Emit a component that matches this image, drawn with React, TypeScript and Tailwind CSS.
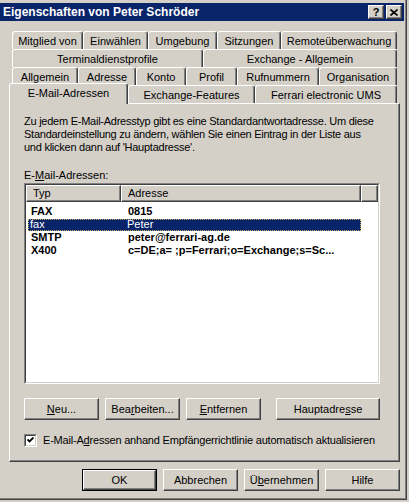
import React from 'react'

const raised =
  'bg-[#d4d0c8] border border-t-white border-l-white border-r-[#404040] border-b-[#404040] shadow-[inset_-1px_-1px_0_#808080]'

const rows = [
  [
    { label: 'Mitglied von', w: 'w-[71px]' },
    { label: 'Einwählen', w: 'w-[65px]' },
    { label: 'Umgebung', w: 'w-[69px]' },
    { label: 'Sitzungen', w: 'w-[64px]' },
    { label: 'Remoteüberwachung', w: 'w-[116px]' },
  ],
  [
    { label: 'Terminaldienstprofile', w: 'w-[191px]' },
    { label: 'Exchange - Allgemein', w: 'w-[194px]' },
  ],
  [
    { label: 'Allgemein', w: 'w-[66px]' },
    { label: 'Adresse', w: 'w-[58px]' },
    { label: 'Konto', w: 'w-[50px]' },
    { label: 'Profil', w: 'w-[51px]' },
    { label: 'Rufnummern', w: 'w-[82px]' },
    { label: 'Organisation', w: 'w-[78px]' },
  ],
]

const entries = [
  { typ: 'FAX', addr: '0815' },
  { typ: 'fax', addr: 'Peter', selected: true },
  { typ: 'SMTP', addr: 'peter@ferrari-ag.de' },
  { typ: 'X400', addr: 'c=DE;a= ;p=Ferrari;o=Exchange;s=Sc...' },
]

function Tab({ label, w }: { label: string; w: string }) {
  return (
    <div
      className={`${w} h-[18px] flex items-center justify-center pt-px rounded-t-[3px] bg-[#d4d0c8] border-l border-t border-r border-l-white border-t-white border-r-[#404040] shadow-[inset_-1px_0_0_#808080] whitespace-nowrap`}
    >
      {label}
    </div>
  )
}

function Button({ children, w = 'w-[75px]', def = false }: { children: React.ReactNode; w?: string; def?: boolean }) {
  if (def) {
    return (
      <div className={`${w} h-[22px] border border-black`}>
        <div className={`${raised} h-full flex items-center justify-center`}>{children}</div>
      </div>
    )
  }
  return <div className={`${w} h-[22px] ${raised} flex items-center justify-center`}>{children}</div>
}

export default function App() {
  return (
    <div className="w-[409px] h-[502px] bg-[#d4d0c8] text-black text-[11px] leading-[13px] font-['Liberation_Sans',Arial,sans-serif] select-none">
      <div className="w-[407px] h-[500px] border-r border-b border-[#404040]">
        <div className="h-full border-r border-b border-[#808080] pt-[3px]">
          {/* title bar */}
          <div className="h-[18px] mr-px bg-[#0a246a] flex items-center pl-[3px] pr-[2px]">
            <span className="text-white font-bold text-[12px] flex-1">Eigenschaften von Peter Schröder</span>
            <div className="flex gap-[2px]">
              <div className={`w-[16px] h-[14px] ${raised} flex items-center justify-center font-bold text-[11px] leading-none`}>?</div>
              <div className={`w-[16px] h-[14px] ${raised} flex items-center justify-center`}>
                <svg width="8" height="7" viewBox="0 0 8 7">
                  <path d="M0.5 0.5 L7.5 6.5 M7.5 0.5 L0.5 6.5" stroke="black" strokeWidth="1.6" />
                </svg>
              </div>
            </div>
          </div>

          <div className="pl-[9px] mt-[10px]">
            {/* tab rows */}
            {rows.map((row, i) => (
              <div key={i} className="flex ml-[3px]">
                {row.map((t) => (
                  <Tab key={t.label} label={t.label} w={t.w} />
                ))}
              </div>
            ))}
            <div className="flex h-[18px] items-end relative z-10">
              <div className="w-[119px] h-[21px] -mb-px rounded-t-[3px] bg-[#d4d0c8] border-l border-t border-r border-l-white border-t-white border-r-[#404040] shadow-[inset_-1px_0_0_#808080] flex items-center justify-center pb-[2px]">
                E-Mail-Adressen
              </div>
              <Tab label="Exchange-Features" w="w-[127px]" />
              <Tab label="Ferrari electronic UMS" w="w-[142px]" />
            </div>

            {/* panel */}
            <div className="w-[391px] h-[359px] border border-t-white border-l-white border-r-[#404040] border-b-[#404040] shadow-[inset_-1px_-1px_0_#808080] pl-[14px] pt-[11px]">
              <p className="whitespace-nowrap tracking-[-0.25px]">
                Zu jedem E-Mail-Adresstyp gibt es eine Standardantwortadresse. Um diese
                <br />
                Standardeinstellung zu ändern, wählen Sie einen Eintrag in der Liste aus
                <br />
                und klicken dann auf 'Hauptadresse'.
              </p>
              <div className="mt-[15px]">
                E-<u>M</u>ail-Adressen:
              </div>

              {/* list view */}
              <div className="mt-px w-[356px] h-[201px] border border-t-[#808080] border-l-[#808080] border-r-white border-b-white">
                <div className="h-full border border-t-[#404040] border-l-[#404040] border-r-[#d4d0c8] border-b-[#d4d0c8] bg-white">
                  <div className="flex h-[17px]">
                    <div className={`w-[95px] ${raised} pl-[6px] flex items-center`}>Typ</div>
                    <div className={`w-[240px] ${raised} pl-[6px] flex items-center`}>Adresse</div>
                    <div className={`flex-1 ${raised}`} />
                  </div>
                  <div className="pt-[3px]">
                    {entries.map((e) =>
                      e.selected ? (
                        <div key={e.typ} className="flex h-[13px] items-center">
                          <div className="ml-[2px] w-[333px] h-[12px] flex items-center bg-[#0a246a] text-white outline-1 outline-dotted outline-[#c8b060] -outline-offset-1">
                            <span className="w-[93px] pl-[2px]">{e.typ}</span>
                            <span className="pl-[6px]">{e.addr}</span>
                          </div>
                        </div>
                      ) : (
                        <div key={e.typ} className="flex h-[13px] items-center font-bold whitespace-nowrap">
                          <span className="w-[95px] pl-[5px]">{e.typ}</span>
                          <span className="pl-[7px]">{e.addr}</span>
                        </div>
                      ),
                    )}
                  </div>
                </div>
              </div>

              {/* buttons */}
              <div className="flex mt-[14px] gap-[6px]">
                <Button>
                  <span>
                    <u>N</u>eu...
                  </span>
                </Button>
                <Button>
                  <span>
                    Bea<u>r</u>beiten...
                  </span>
                </Button>
                <Button>
                  <span>
                    <u>E</u>ntfernen
                  </span>
                </Button>
                <div className="ml-[9px]">
                  <Button w="w-[104px]">
                    <span>
                      Hauptadre<u>s</u>se
                    </span>
                  </Button>
                </div>
              </div>

              {/* checkbox */}
              <div className="flex items-center mt-[14px] h-[13px]">
                <div className="w-[13px] h-[13px] border border-t-[#808080] border-l-[#808080] border-r-white border-b-white">
                  <div className="w-full h-full border border-t-[#404040] border-l-[#404040] border-r-[#d4d0c8] border-b-[#d4d0c8] bg-white flex items-center justify-center">
                    <svg width="7" height="7" viewBox="0 0 7 7">
                      <path d="M0.5 2.5 L2.5 4.5 L6.5 0.5" stroke="black" strokeWidth="1.8" fill="none" />
                    </svg>
                  </div>
                </div>
                <span className="ml-[6px] whitespace-nowrap tracking-[-0.2px]">
                  E-Mail-A<u>d</u>ressen anhand Empfängerrichtlinie automatisch aktualisieren
                </span>
              </div>
            </div>

            {/* dialog buttons */}
            <div className="flex gap-[6px] mt-[7px] ml-[73px]">
              <Button def>OK</Button>
              <Button>Abbrechen</Button>
              <Button>
                <span>
                  Ü<u>b</u>ernehmen
                </span>
              </Button>
              <Button>Hilfe</Button>
            </div>
          </div>
        </div>
      </div>
    </div>
  )
}
